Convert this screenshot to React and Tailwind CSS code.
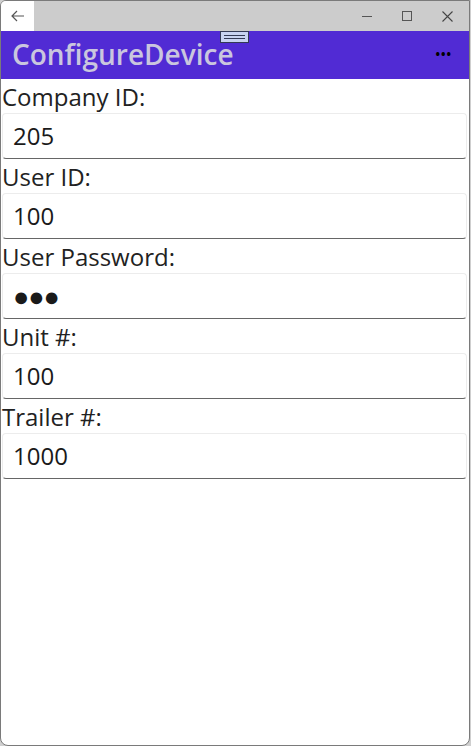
import React from 'react';

const FIELDS = [
  { label: 'Company ID:', value: '205' },
  { label: 'User ID:', value: '100' },
  { label: 'User Password:', value: '●●●', password: true },
  { label: 'Unit #:', value: '100' },
  { label: 'Trailer #:', value: '1000' },
];

const App = () => {
  return (
    <div className="w-[471px] h-[746px] bg-[#cfcfcf] font-['Open_Sans',sans-serif]">
      <div className="w-[470px] h-[746px] bg-white border border-[#7a7a7a] rounded-b-[8px] rounded-tl-[6px] overflow-hidden flex flex-col">
        {/* Title bar */}
        <div className="h-[30px] bg-[#cccccc] flex items-stretch shrink-0">
          <div className="w-[33px] bg-white flex items-center justify-center">
            <svg width="14" height="12" viewBox="0 0 14 12" fill="none" stroke="#555" strokeWidth="1.2">
              <path d="M6 1 L1 6 L6 11 M1 6 H13" />
            </svg>
          </div>
          <div className="flex-1" />
          <div className="w-[40px] flex items-center justify-center">
            <div className="w-[10px] h-px bg-[#555]" />
          </div>
          <div className="w-[40px] flex items-center justify-center">
            <div className="w-[10px] h-[10px] border border-[#555]" />
          </div>
          <div className="w-[40px] flex items-center justify-center mr-[2px]">
            <svg width="11" height="11" viewBox="0 0 11 11" stroke="#444" strokeWidth="1.1">
              <path d="M0.5 0.5 L10.5 10.5 M10.5 0.5 L0.5 10.5" />
            </svg>
          </div>
        </div>

        {/* Header */}
        <div className="relative h-[48px] bg-[#512bd4] flex items-center justify-between pl-[11px] pr-[17px] shrink-0">
          <span className="text-[28px] font-semibold text-[#cac6de] leading-none -mt-[2px]">ConfigureDevice</span>
          <span className="text-black text-[12px] font-bold tracking-[1px] leading-none">•••</span>
          <div className="absolute left-[219px] top-0 w-[29px] h-[12px] bg-[#c8d3f1] border border-[#333a55] flex flex-col justify-center items-center gap-[2px]">
            <div className="w-[21px] h-px bg-[#333a55]" />
            <div className="w-[21px] h-px bg-[#333a55]" />
          </div>
        </div>

        {/* Form */}
        <div className="flex flex-col pr-[2px] pt-[1px]">
          {FIELDS.map((f) => (
            <div key={f.label} className="flex flex-col">
              <div className="h-[33px] pl-[1px] text-[24px] text-[#222] leading-[33px]">{f.label}</div>
              <div className="h-[46px] ml-[1px] border border-[#ececec] border-b-[#666] rounded-[4px] flex items-center pl-[10px]">
                <span className={f.password ? 'text-[27px] text-[#1a1a1a] tracking-[-1px]' : 'text-[24px] text-[#1a1a1a]'}>
                  {f.value}
                </span>
              </div>
              <div className="h-px" />
            </div>
          ))}
        </div>
      </div>
    </div>
  );
};

export default App;
